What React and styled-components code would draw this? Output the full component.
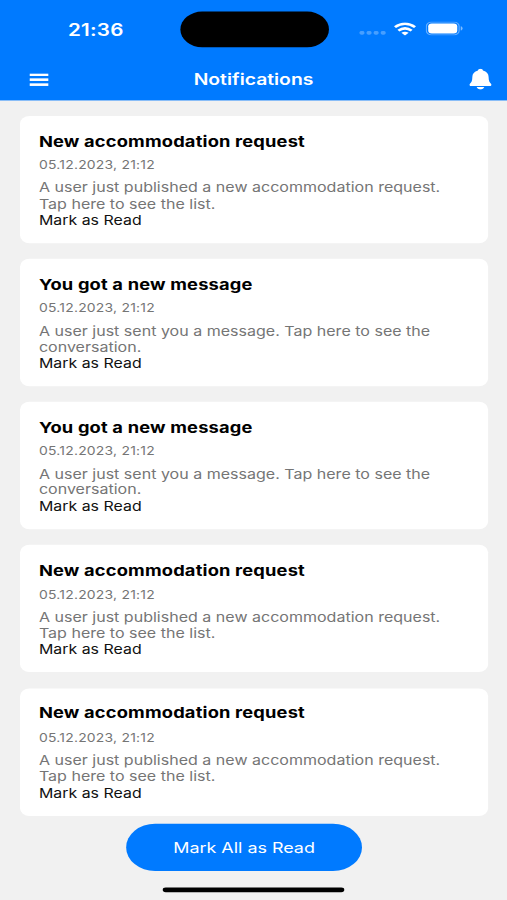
import React from "react";
import styled, { createGlobalStyle } from "styled-components";

const REQUEST = {
  title: "New accommodation request",
  lines: ["A user just published a new accommodation request.", "Tap here to see the list."],
};

const MESSAGE = {
  title: "You got a new message",
  lines: ["A user just sent you a message. Tap here to see the", "conversation."],
};

const notifications = [REQUEST, MESSAGE, MESSAGE, REQUEST, REQUEST].map((item, index) => ({
  ...item,
  id: index,
  date: "05.12.2023, 21:12",
}));

const WifiIcon = () => (
  <svg width="19" height="14" viewBox="0 0 19 14" fill="none" stroke="#fff" strokeWidth="2.6">
    <path d="M1 5.1 Q9.5 -2 18 5.1" />
    <path d="M3.9 8.7 Q9.5 4 15.1 8.7" />
    <path d="M9.5 13.8 L6.4 10.9 Q9.5 8.6 12.6 10.9 Z" fill="#fff" stroke="none" />
  </svg>
);

const BatteryIcon = () => (
  <svg width="32" height="15" viewBox="0 0 32 15">
    <rect x="0.6" y="0.9" width="27.8" height="13.2" rx="4.2" fill="none" stroke="#fff" strokeOpacity="0.4" />
    <rect x="2.2" y="2.3" width="24.6" height="10.4" rx="3" fill="#fff" />
    <path d="M29.8 5.3 C31.9 6.1 31.9 8.9 29.8 9.7 Z" fill="#fff" fillOpacity="0.5" />
  </svg>
);

const MenuIcon = () => (
  <svg width="16.5" height="13" viewBox="0 0 16.5 13" fill="#fff">
    <rect width="16.5" height="2.7" />
    <rect y="5.15" width="16.5" height="2.7" />
    <rect y="10.3" width="16.5" height="2.7" />
  </svg>
);

const BellIcon = () => (
  <svg width="19" height="22" viewBox="0 0 19 22" fill="#fff">
    <path d="M9.5 0.2 C8.3 0.2 7.5 1 7.4 2 C4.2 2.9 2.6 5.5 2.6 8.7 C2.6 12.9 1.8 14.4 0.4 15.9 C-0.3 16.8 0.2 18.1 1.4 18.1 H17.6 C18.8 18.1 19.3 16.8 18.6 15.9 C17.2 14.4 16.4 12.9 16.4 8.7 C16.4 5.5 14.8 2.9 11.6 2 C11.5 1 10.7 0.2 9.5 0.2 Z" />
    <path d="M6.3 19.2 H12.7 C12.3 20.8 11.1 21.8 9.5 21.8 C7.9 21.8 6.7 20.8 6.3 19.2 Z" />
  </svg>
);

const App = () => {
  return (
    <Viewport>
      <GlobalStyle />
      <Phone>
        <Header>
          <StatusBar>
            <Clock>21:36</Clock>
            <Island />
            <StatusIcons>
              <Signal>
                <Dot />
                <Dot />
                <Dot />
                <Dot />
              </Signal>
              <WifiIcon />
              <BatteryIcon />
            </StatusIcons>
          </StatusBar>
          <NavBar>
            <IconButton aria-label="Menu">
              <MenuIcon />
            </IconButton>
            <ScreenTitle>Notifications</ScreenTitle>
            <IconButton aria-label="Notifications">
              <BellIcon />
            </IconButton>
          </NavBar>
        </Header>

        <List>
          {notifications.map(({ id, title, date, lines }) => (
            <Card key={id}>
              <CardTitle>{title}</CardTitle>
              <CardDate>{date}</CardDate>
              {lines.map((line) => (
                <CardText key={line}>{line}</CardText>
              ))}
              <ReadButton>Mark as Read</ReadButton>
            </Card>
          ))}
        </List>

        <Footer>
          <ReadAllButton>Mark All as Read</ReadAllButton>
          <HomeIndicator />
        </Footer>
      </Phone>
    </Viewport>
  );
};

const GlobalStyle = createGlobalStyle`
  * {
    box-sizing: border-box;
  }

  body {
    margin: 0;
    background: #f1f1f1;
    font-family: Inter, "Liberation Sans", sans-serif;
  }

  button {
    display: block;
    padding: 0;
    border: 0;
    background: none;
    font: inherit;
    text-align: left;
  }

  svg {
    display: block;
  }
`;

const Viewport = styled.div`
  width: 507px;
  height: 900px;
  overflow: hidden;
`;

// A 430x932 screen fitted to the 507x900 viewport
const Phone = styled.div`
  display: flex;
  flex-direction: column;
  width: 430px;
  height: 932px;
  background: #f1f1f1;
  transform: scale(1.17907, 0.96567);
  transform-origin: 0 0;
`;

const Header = styled.header`
  height: 103.6px;
  background: #007aff;
`;

const StatusBar = styled.div`
  display: grid;
  grid-template-columns: 152.5px 126px 1fr;
  height: 60.5px;
  padding-top: 12px;
`;

const Clock = styled.div`
  padding-left: 57.6px;
  color: #fff;
  font-size: 17.5px;
  font-weight: 600;
  line-height: 37px;
  letter-spacing: 0.2px;
`;

const Island = styled.div`
  height: 37px;
  border-radius: 19px;
  background: #000;
`;

const StatusIcons = styled.div`
  display: flex;
  align-items: center;
  height: 35px;
  padding-left: 26.6px;
  gap: 7px;

  svg + svg {
    margin-left: 0.6px;
  }
`;

const Signal = styled.div`
  display: flex;
  gap: 2.3px;
  padding-top: 9px;
`;

const Dot = styled.span`
  width: 3.8px;
  height: 3.8px;
  border-radius: 1.5px;
  background: rgba(255, 255, 255, 0.28);
`;

const NavBar = styled.nav`
  display: flex;
  align-items: center;
  justify-content: space-between;
  height: 43px;
  padding: 0 13px 0 24.5px;
`;

const IconButton = styled.button`
  flex: none;
`;

const ScreenTitle = styled.h1`
  margin: 0 0 1px -9px;
  color: #fff;
  font-size: 16.4px;
  font-weight: 600;
`;

const List = styled.main`
  display: flex;
  flex-direction: column;
  gap: 16.15px;
  padding: 16.4px 16px 0 17px;
`;

const Card = styled.article`
  height: 132px;
  padding: 16.8px 16px 0;
  border-radius: 8px;
  background: #fff;
`;

const CardTitle = styled.h2`
  margin: 0 0 8.4px;
  font-size: 15.5px;
  font-weight: 700;
  line-height: 19px;
  letter-spacing: 0.15px;
  white-space: nowrap;
`;

const CardDate = styled.div`
  margin-bottom: 7.8px;
  color: #757575;
  font-size: 11.8px;
  line-height: 14.4px;
  letter-spacing: 0.2px;
`;

const CardText = styled.div`
  color: #757575;
  font-size: 13.6px;
  line-height: 16.8px;
  white-space: nowrap;
`;

const ReadButton = styled.button`
  color: #111;
  font-size: 13.5px;
  line-height: 16.8px;
`;

const Footer = styled.footer`
  display: flex;
  flex-direction: column;
  align-items: center;
  padding-top: 8px;
`;

const ReadAllButton = styled.button`
  width: 200px;
  height: 49px;
  margin-right: 16px;
  border-radius: 25px;
  background: #007aff;
  color: #fff;
  font-size: 15.2px;
  text-align: center;
`;

const HomeIndicator = styled.div`
  width: 154px;
  height: 5.4px;
  margin-top: 17px;
  border-radius: 3px;
  background: #000;
`;

export default App;
